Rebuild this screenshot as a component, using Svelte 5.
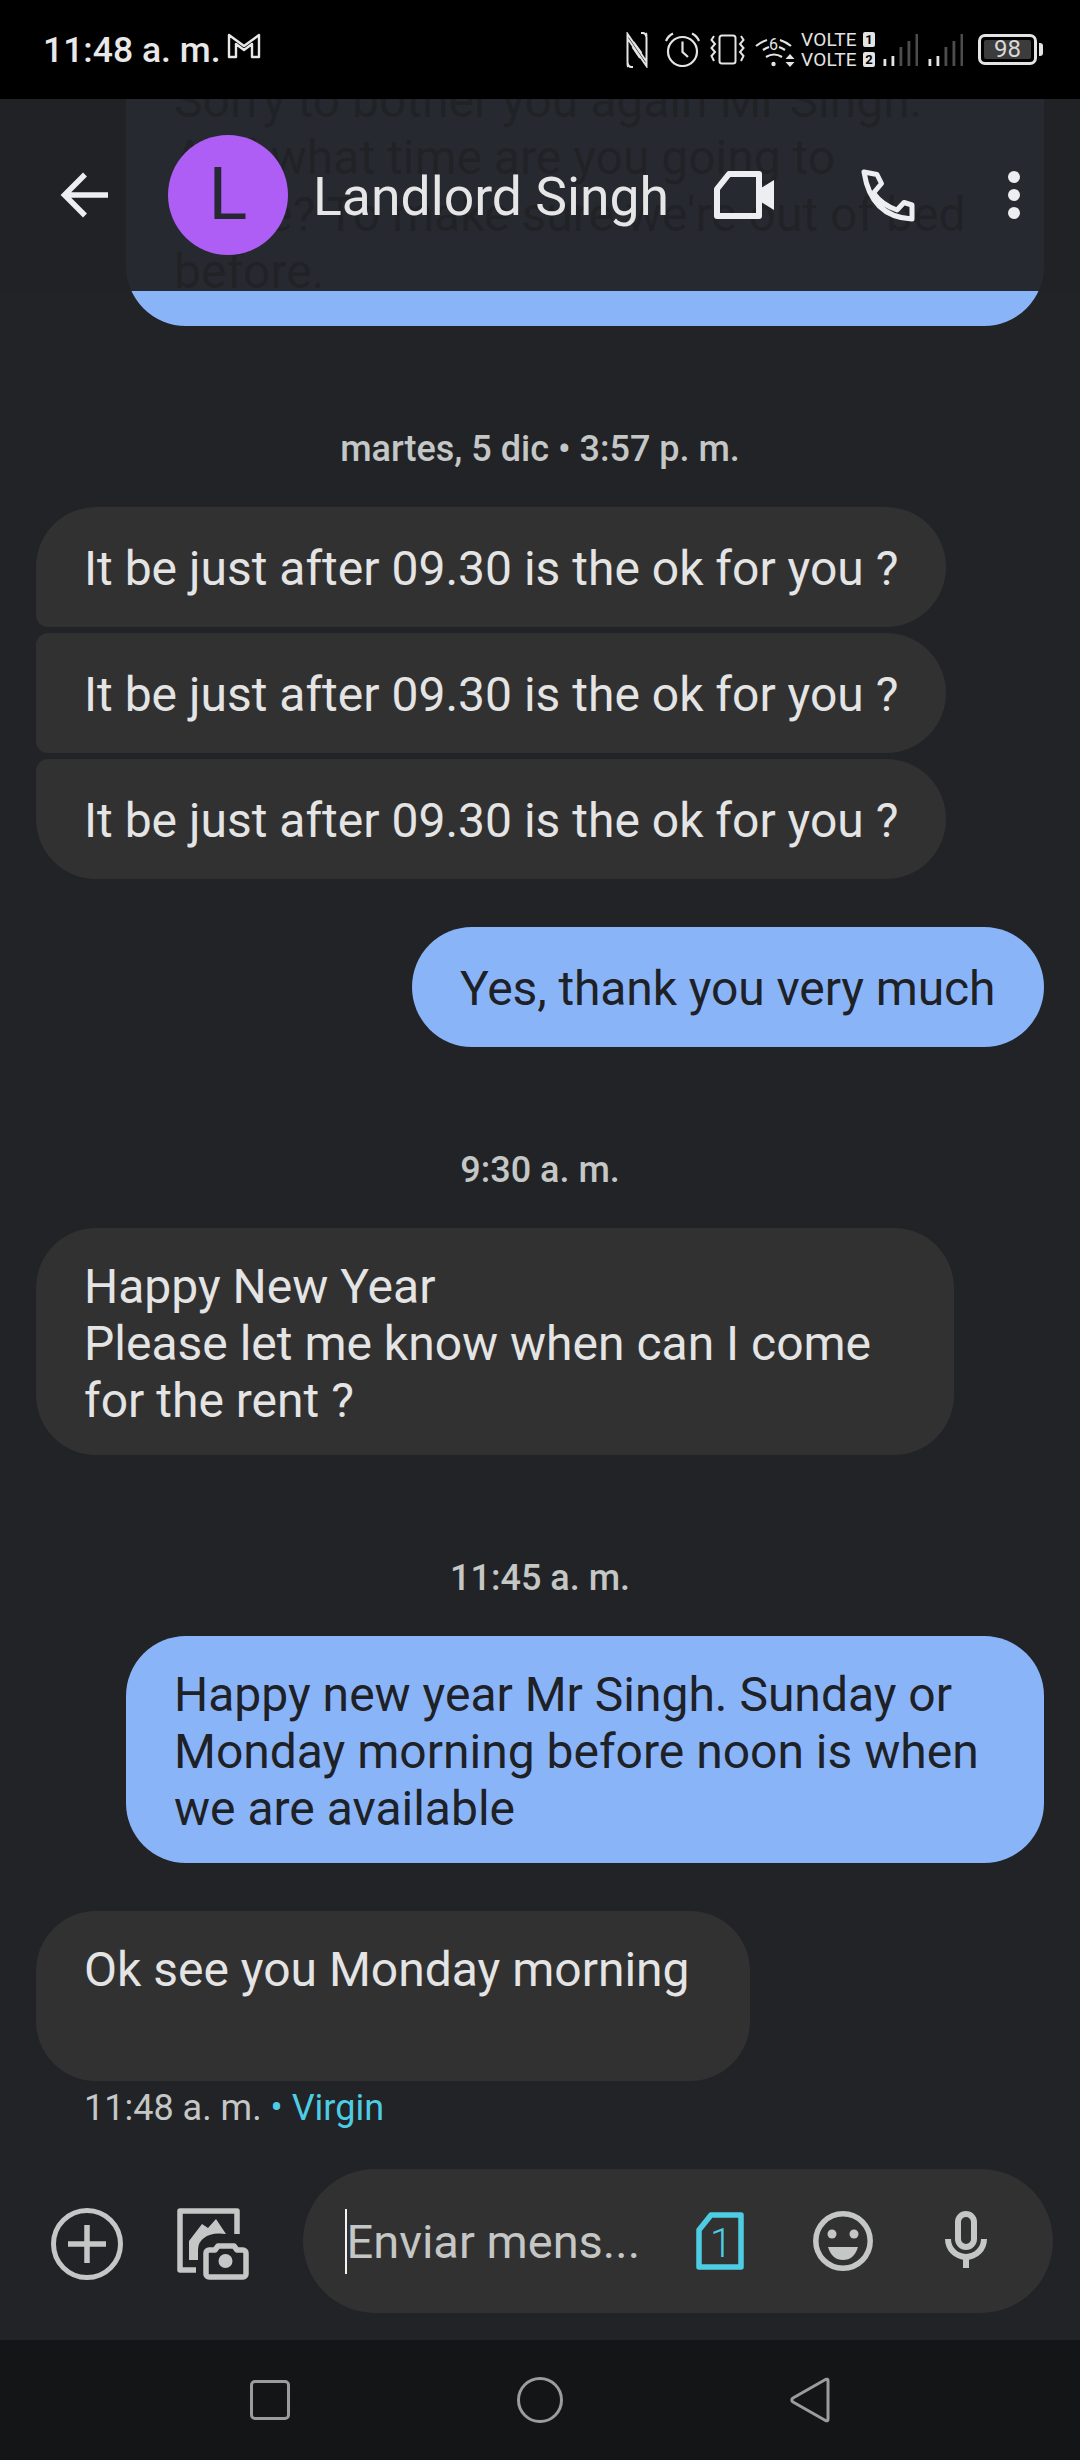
<script>
  const repeats = [0, 1, 2];
  const bars = [
    { x: 1.5, y: 25, on: true },
    { x: 9.5, y: 22, on: true },
    { x: 17.5, y: 13, on: false },
    { x: 25.5, y: 7, on: false },
    { x: 33.5, y: 0, on: false }
  ];
</script>

<div class="phone">
  <header class="status">
    <span class="clock">11:48 a. m.</span>
    <svg class="gmail" width="34" height="26" viewBox="0 0 34 26"><path d="M2 2 L17 13 L32 2 V24 H25 V11 L17 17 L9 11 V24 H2 Z" fill="none" stroke="#e8e8e8" stroke-width="2.4" stroke-linejoin="round"/></svg>
    <div class="status-icons">
      <svg class="ic-n" width="22" height="36" viewBox="0 0 22 36"><path d="M2 35 Q1.500 34 1.500 30 V2 L20 29 M7 35 H5 Q2.500 35 1.500 31 M20 1 Q20.500 2 20.500 6 V34 L2 7 M15 1 H17 Q19.500 1 20.500 5 M6.500 15 L14 26 M7.500 10 L15.500 21" fill="none" stroke="#e4e4e4" stroke-width="2"/></svg>
      <svg class="ic-alarm" width="37" height="35" viewBox="0 0 37 35"><circle cx="18.500" cy="19.500" r="14.500" fill="none" stroke="#e4e4e4" stroke-width="2.200"/><path d="M18.500 9.500 V20 L24 25 M2 9 Q4 4 9 1.500 M35 9 Q33 4 28 1.500" fill="none" stroke="#e4e4e4" stroke-width="2.200"/></svg>
      <svg class="ic-vib" width="35" height="31" viewBox="0 0 35 31"><rect x="9.500" y="1.500" width="16" height="28" rx="2.500" fill="none" stroke="#e4e4e4" stroke-width="2"/><path d="M4 2 L1.500 6 L5 10 L1.500 14 L5 18 L1.500 22 L4 27 M31 2 L33.500 6 L30 10 L33.500 14 L30 18 L33.500 22 L31 27" fill="none" stroke="#e4e4e4" stroke-width="2"/></svg>
      <svg class="ic-wifi" width="42" height="34" viewBox="0 0 42 34"><path d="M1 13 Q6 9 12 7 M8 17 Q11 15 14 14 M25 7 Q31 9 36 13 M24 14 Q27 15 30 17 M11 24 Q19 19 27 24" fill="none" stroke="#e4e4e4" stroke-width="2.200"/><text x="18.500" y="17" class="wifi-six">6</text><circle cx="18.500" cy="31" r="2.200" fill="#e4e4e4"/><path d="M35 21 L39.500 26 H30.500 Z M30.500 29 H39.500 L35 34 Z" fill="#e4e4e4"/></svg>
      <div class="volte">
        <div class="volte-row"><span class="volte-word">VOLTE</span><span class="chip">1</span></div>
        <div class="volte-row"><span class="volte-word">VOLTE</span><span class="chip">2</span></div>
      </div>
      {#each [0, 1] as sim}
        <svg class="ic-signal" width="36" height="32" viewBox="0 0 36 32" data-sim={sim}>
          {#each bars as bar}
            <rect x={bar.x} y={bar.y} width="2.800" height={32 - bar.y} fill={bar.on ? '#e4e4e4' : '#4d4d4d'} />
          {/each}
        </svg>
      {/each}
      <div class="battery"><span class="battery-level">98</span></div>
    </div>
  </header>

  <main class="chat">
    <div class="appbar">
      <svg class="back" width="48" height="46" viewBox="0 0 48 46"><path d="M48 23 H5 M25 2.500 L4.500 23 L25 43.500" fill="none" stroke="#eceef1" stroke-width="5.500"/></svg>
      <div class="avatar">L</div>
      <h1 class="title">Landlord Singh</h1>
      <svg class="video" width="60" height="48" viewBox="0 0 60 48"><path d="M3 18 L15 3 H45 V45 H3 Z" fill="none" stroke="#eceef1" stroke-width="6" stroke-linejoin="round"/><path d="M47 17 L60 9 V39 L47 31 Z" fill="#eceef1"/></svg>
      <svg class="call" width="54" height="53" viewBox="0 0 54 53"><path d="M3 3 L16 5.500 L20.500 14.500 L12.500 24 Q21 36 36 41 L43 33.500 L51 36 V50 Q10 48 3 3 Z" fill="none" stroke="#eceef1" stroke-width="5" stroke-linejoin="round"/></svg>
      <svg class="dots" width="12" height="48" viewBox="0 0 12 48"><circle cx="6" cy="6" r="6" fill="#eceef1"/><circle cx="6" cy="24" r="6" fill="#eceef1"/><circle cx="6" cy="42" r="6" fill="#eceef1"/></svg>
    </div>

    <div class="thread">
      <div class="bubble out clipped">Sorry to bother you again Mr Singh.<br />And what time are you going to<br />arrive? To make sure we're out of bed<br />before.</div>

      <div class="stamp">martes, 5 dic • 3:57 p. m.</div>
      <div class="group">
        {#each repeats as i}
          <div class="bubble in single" class:first={i === 0} class:middle={i === 1} class:last={i === 2}>It be just after 09.30 is the ok for you ?</div>
        {/each}
      </div>
      <div class="bubble out single yes">Yes, thank you very much</div>

      <div class="stamp">9:30 a. m.</div>
      <div class="bubble in wide">Happy New Year<br />Please let me know when can I come for the rent ?</div>

      <div class="stamp">11:45 a. m.</div>
      <div class="bubble out wide">Happy new year Mr Singh. Sunday or Monday morning before noon is when we are available</div>
      <div class="bubble in ok">Ok see you Monday morning</div>
      <div class="meta">11:48 a. m. <span class="carrier">• Virgin</span></div>
    </div>
  </main>

  <footer class="composer">
    <svg class="plus" width="72" height="72" viewBox="0 0 72 72"><circle cx="36" cy="36" r="33.500" fill="none" stroke="#c4c7c5" stroke-width="5"/><path d="M17 36 H55 M36 17 V55" stroke="#c4c7c5" stroke-width="5.500"/></svg>
    <svg class="gallery" width="72" height="72" viewBox="0 0 72 72"><path d="M60 26 V3 H3 V62 H19" fill="none" stroke="#c4c7c5" stroke-width="5.500" stroke-linejoin="round"/><path d="M12 33 L25 16 L31 20 L39 11 L49 26 Q34 24 27 30 Q21 34 21 42 V52 H12 Z" fill="#c4c7c5"/><path d="M32 42 H38 L41 38 H57 L60 42 H66 A3 3 0 0 1 69 45 V66 A3 3 0 0 1 66 69 H32 A3 3 0 0 1 29 66 V45 A3 3 0 0 1 32 42 Z" fill="#212327" stroke="#c4c7c5" stroke-width="5.500" stroke-linejoin="round"/><circle cx="48.500" cy="53" r="7" fill="#c4c7c5"/></svg>
    <div class="field">
      <span class="caret"></span>
      <span class="placeholder">Enviar mens...</span>
      <svg class="sim" width="48" height="58" viewBox="0 0 48 58"><path d="M15 3 H45 V55 H3 V18 Z" fill="none" stroke="#4dcde3" stroke-width="5.500" stroke-linejoin="round"/><text x="25" y="45" class="sim-num">1</text></svg>
      <svg class="smile" width="60" height="60" viewBox="0 0 60 60"><circle cx="30" cy="30" r="27.200" fill="none" stroke="#c4c7c5" stroke-width="5.500"/><circle cx="19" cy="23" r="4.500" fill="#c4c7c5"/><circle cx="41" cy="23" r="4.500" fill="#c4c7c5"/><path d="M15 36 H45 Q41 49 30 49 Q19 49 15 36 Z" fill="#c4c7c5"/></svg>
      <svg class="mic" width="42" height="57" viewBox="0 0 42 57"><rect x="13" y="3" width="16" height="33" rx="8" fill="none" stroke="#c4c7c5" stroke-width="6"/><path d="M3 28 A18 18 0 0 0 39 28" fill="none" stroke="#c4c7c5" stroke-width="6"/><rect x="18" y="44" width="6" height="13" fill="#c4c7c5"/></svg>
    </div>
  </footer>

  <nav class="navbar">
    <svg width="40" height="40" viewBox="0 0 40 40"><rect x="1.500" y="1.500" width="37" height="37" rx="3.500" fill="none" stroke="#9c9c9c" stroke-width="3"/></svg>
    <svg width="46" height="46" viewBox="0 0 46 46"><circle cx="23" cy="23" r="21.500" fill="none" stroke="#9c9c9c" stroke-width="3"/></svg>
    <svg width="40" height="46" viewBox="0 0 40 46"><path d="M38 3.500 V42.500 Q38 44.500 35.500 43.500 L3 25 Q0.500 23 3 21 L35.500 2.500 Q38 1.500 38 3.500 Z" fill="none" stroke="#9c9c9c" stroke-width="3" stroke-linejoin="round"/></svg>
  </nav>
</div>

<style>
  :global(body) {
    margin: 0;
    background: #212327;
  }
  .phone {
    width: 1080px;
    height: 2460px;
    display: flex;
    flex-direction: column;
    overflow: hidden;
    background: #212327;
    font-family: Roboto, "Liberation Sans", sans-serif;
  }

  /* status bar */
  .status {
    height: 99px;
    flex: none;
    background: #000;
    display: flex;
    align-items: center;
    padding: 0 43px 0 43px;
    box-sizing: border-box;
    color: #e8e8e8;
  }
  .clock {
    font-size: 35.500px;
    font-weight: 500;
  }
  .gmail {
    margin: -7px 0 0 6px;
  }
  .status-icons {
    margin-left: auto;
    display: flex;
    align-items: center;
  }
  .ic-n { margin-right: 16px; }
  .ic-alarm { margin-right: 9px; }
  .ic-vib { margin-right: 10px; }
  .ic-wifi { margin-right: 4px; }
  .wifi-six {
    font-family: Roboto, sans-serif;
    font-size: 16px;
    fill: #e4e4e4;
    text-anchor: middle;
  }
  .volte {
    display: flex;
    flex-direction: column;
    gap: 5px;
    margin-right: 7px;
  }
  .volte-row {
    display: flex;
    align-items: center;
    gap: 3px;
    height: 15px;
  }
  .volte-word {
    width: 59px;
    font-size: 19px;
    line-height: 15px;
    letter-spacing: 0.200px;
    color: #e4e4e4;
  }
  .chip {
    width: 12px;
    height: 15px;
    border-radius: 2px;
    background: #e4e4e4;
    color: #000;
    font-size: 13px;
    font-weight: 700;
    line-height: 15px;
    text-align: center;
  }
  .ic-signal { margin-right: 9px; }
  .battery {
    width: 59px;
    height: 31px;
    margin-left: 6px;
    box-sizing: border-box;
    border: 3px solid #e4e4e4;
    border-radius: 7px;
    padding: 3px;
    position: relative;
    display: flex;
  }
  .battery::after {
    content: "";
    position: absolute;
    right: -9px;
    top: 6px;
    width: 4px;
    height: 13px;
    background: #e4e4e4;
    border-radius: 0 3px 3px 0;
  }
  .battery-level {
    flex: 1;
    background: #3c3c3c;
    border-radius: 2px;
    color: #d8d8d8;
    font-size: 24px;
    line-height: 19px;
    text-align: center;
  }

  /* chat area */
  .chat {
    flex: 1;
    min-height: 0;
    position: relative;
    overflow: hidden;
  }
  .appbar {
    position: absolute;
    left: 0;
    right: 0;
    top: 0;
    height: 192px;
    z-index: 2;
    background: rgba(33, 35, 39, 0.955);
    display: flex;
    align-items: center;
    box-sizing: border-box;
    padding: 0 60px;
    color: #e8eaed;
  }
  .back { flex: none; }
  .avatar {
    flex: none;
    width: 120px;
    height: 120px;
    margin-left: 60px;
    border-radius: 50%;
    background: #ae5ef5;
    color: #262932;
    font-size: 72px;
    line-height: 120px;
    text-align: center;
  }
  .title {
    margin: 2px 0 0 25px;
    width: 354px;
    flex: none;
    font-size: 53.500px;
    font-weight: 400;
    white-space: nowrap;
    color: #e6e6e6;
  }
  .video { margin-left: 47px; flex: none; }
  .call { margin-left: 87px; flex: none; }
  .dots { margin-left: 93px; flex: none; }

  .thread {
    display: flex;
    flex-direction: column;
    align-items: flex-start;
    padding: 0 36px;
    font-size: 48px;
    line-height: 57px;
  }
  .bubble {
    box-sizing: border-box;
    padding: 30px 48px 26px;
    border-radius: 60px;
  }
  .single {
    height: 120px;
    padding-top: 33px;
    padding-bottom: 30px;
  }
  .in {
    background: #313131;
    color: #e4e4e4;
  }
  .out {
    background: #8ab4f8;
    color: #1e2126;
    align-self: flex-end;
  }
  .wide { width: 918px; }
  .clipped {
    width: 918px;
    margin-top: -57px;
  }
  .yes {
    width: 632px;
    margin-top: 48px;
    white-space: nowrap;
    letter-spacing: -0.100px;
  }
  .ok {
    width: 714px;
    height: 170px;
    margin-top: 48px;
  }
  .group {
    display: flex;
    flex-direction: column;
    gap: 6px;
    width: 910px;
    white-space: nowrap;
  }
  .first { border-bottom-left-radius: 12px; }
  .middle { border-top-left-radius: 12px; border-bottom-left-radius: 12px; }
  .last { border-top-left-radius: 12px; }
  .stamp {
    align-self: center;
    margin: 100px 0 35px;
    font-size: 36px;
    font-weight: 500;
    line-height: 46px;
    color: #c4c7c5;
  }
  .meta {
    margin: 4px 0 0 48px;
    font-size: 36px;
    line-height: 46px;
    color: #c4c7c5;
  }
  .carrier { color: #4dcde3; }

  /* composer */
  .composer {
    flex: none;
    height: 210px;
    box-sizing: border-box;
    padding: 39px 27px 27px 51px;
    display: flex;
    align-items: flex-start;
  }
  .plus { margin-top: 39px; flex: none; }
  .gallery { margin: 39px 54px 0 54px; flex: none; }
  .field {
    flex: 1;
    height: 144px;
    border-radius: 72px;
    background: #313131;
    display: flex;
    align-items: center;
    box-sizing: border-box;
    padding-left: 42px;
    position: relative;
  }
  .caret {
    width: 1.500px;
    height: 65px;
    background: #f2f2f2;
    flex: none;
  }
  .placeholder {
    margin: 0;
    width: 349px;
    font-size: 47px;
    color: #c4c7c5;
    white-space: nowrap;
  }
  .sim { flex: none; }
  .sim-num {
    font-family: Roboto, sans-serif;
    font-size: 40px;
    font-weight: 300;
    fill: #4dcde3;
    text-anchor: middle;
  }
  .smile { margin: 0 0 0 69px; flex: none; }
  .mic { margin: -3px 0 0 72px; flex: none; }

  /* navigation bar */
  .navbar {
    flex: none;
    height: 120px;
    background: #141517;
    display: flex;
    align-items: center;
    padding-left: 250px;
    gap: 227px;
    box-sizing: border-box;
  }
</style>
